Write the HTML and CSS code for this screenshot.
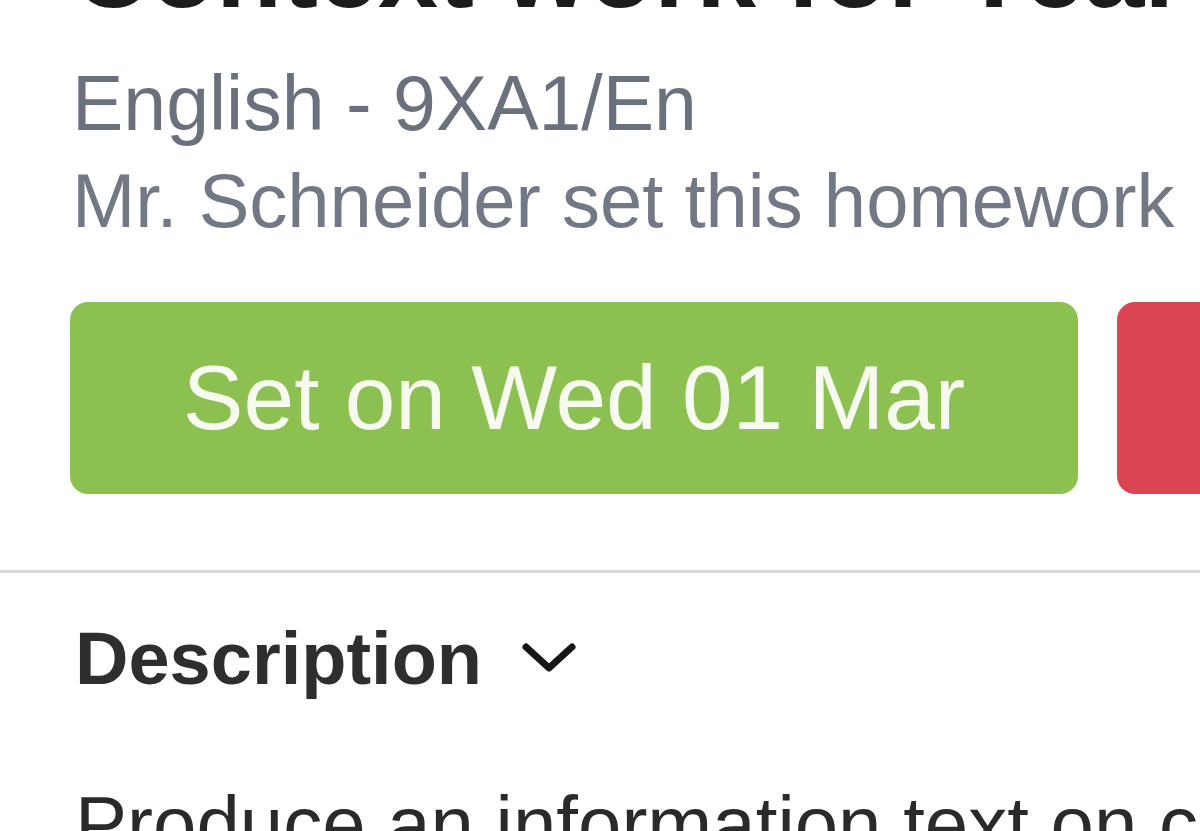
FILE: index.html
```html
<!DOCTYPE html>
<html lang="en">

<head>
<meta charset="UTF-8">
<meta name="viewport" content="width=device-width, initial-scale=1.0">
<link rel="stylesheet" href="styles.css">
</head>

<body>
<div class="page">
	<section class="header">
		<h1 class="title">Context work for Year 9</h1>
		<p class="subject">English - 9XA1/En</p>
		<p class="teacher">Mr. Schneider set this homework</p>

		<div class="actions">
			<button class="badge badge-set">Set on Wed 01 Mar</button>
			<button class="badge badge-due">Due on Fri 10 Mar</button>
		</div>
	</section>

	<hr class="divider">

	<section class="details">
		<h2 class="section-title">
			Description
			<svg class="chevron" width="58" height="32" viewBox="0 0 58 32">
				<path d="M6 6 L29 27 L52 6" fill="none" stroke="#151515" stroke-width="7" stroke-linecap="round" stroke-linejoin="round"/>
			</svg>
		</h2>
		<p class="description">Produce an information text on conflict in the area studied</p>
	</section>
</div>
</body>

</html>
```

FILE: styles.css
```css
html, body {
	margin: 0;
	padding: 0;
	overflow: hidden;
	background-color: #fff;
}

body {
	font-family: "Liberation Sans", Arial, sans-serif;
	width: 1200px;
	height: 831px;
}

.page {
	display: flex;
	flex-direction: column;
}

.header {
	padding-left: 72px;
}

.title {
	margin: -90px 0 0;
	font-size: 108px;
	line-height: 120px;
	font-weight: bold;
	color: #1c1c1e;
	white-space: nowrap;
}

.subject,
.teacher {
	margin: 0;
	line-height: 97px;
	white-space: nowrap;
}

.subject {
	margin-top: 25px;
	font-size: 77px;
	color: #6b717c;
}

.teacher {
	font-size: 76px;
	color: #737984;
}

.actions {
	display: flex;
	gap: 39px;
	margin: 53px 0 0 -2px;
}

.badge {
	flex-shrink: 0;
	height: 192px;
	border: none;
	border-radius: 18px;
	padding: 0;
	font-family: "Liberation Sans", Arial, sans-serif;
	font-size: 91px;
	color: #f7fbef;
	white-space: nowrap;
}

.badge-set {
	width: 1008px;
	background-color: #8cc152;
}

.badge-due {
	width: 1008px;
	background-color: #da4453;
}

.divider {
	margin: 76px 0 0;
	height: 3px;
	border: none;
	background-color: #d6d6da;
}

.details {
	padding-left: 75px;
}

.section-title {
	display: flex;
	align-items: center;
	gap: 38px;
	margin: 41px 0 0;
	font-size: 74px;
	line-height: 90px;
	font-weight: bold;
	color: #2e2e30;
}

.chevron {
	margin-top: -4px;
}

.description {
	margin: 70px 0 0;
	font-size: 78px;
	line-height: 100px;
	color: #2a2a2c;
	white-space: nowrap;
}
```
